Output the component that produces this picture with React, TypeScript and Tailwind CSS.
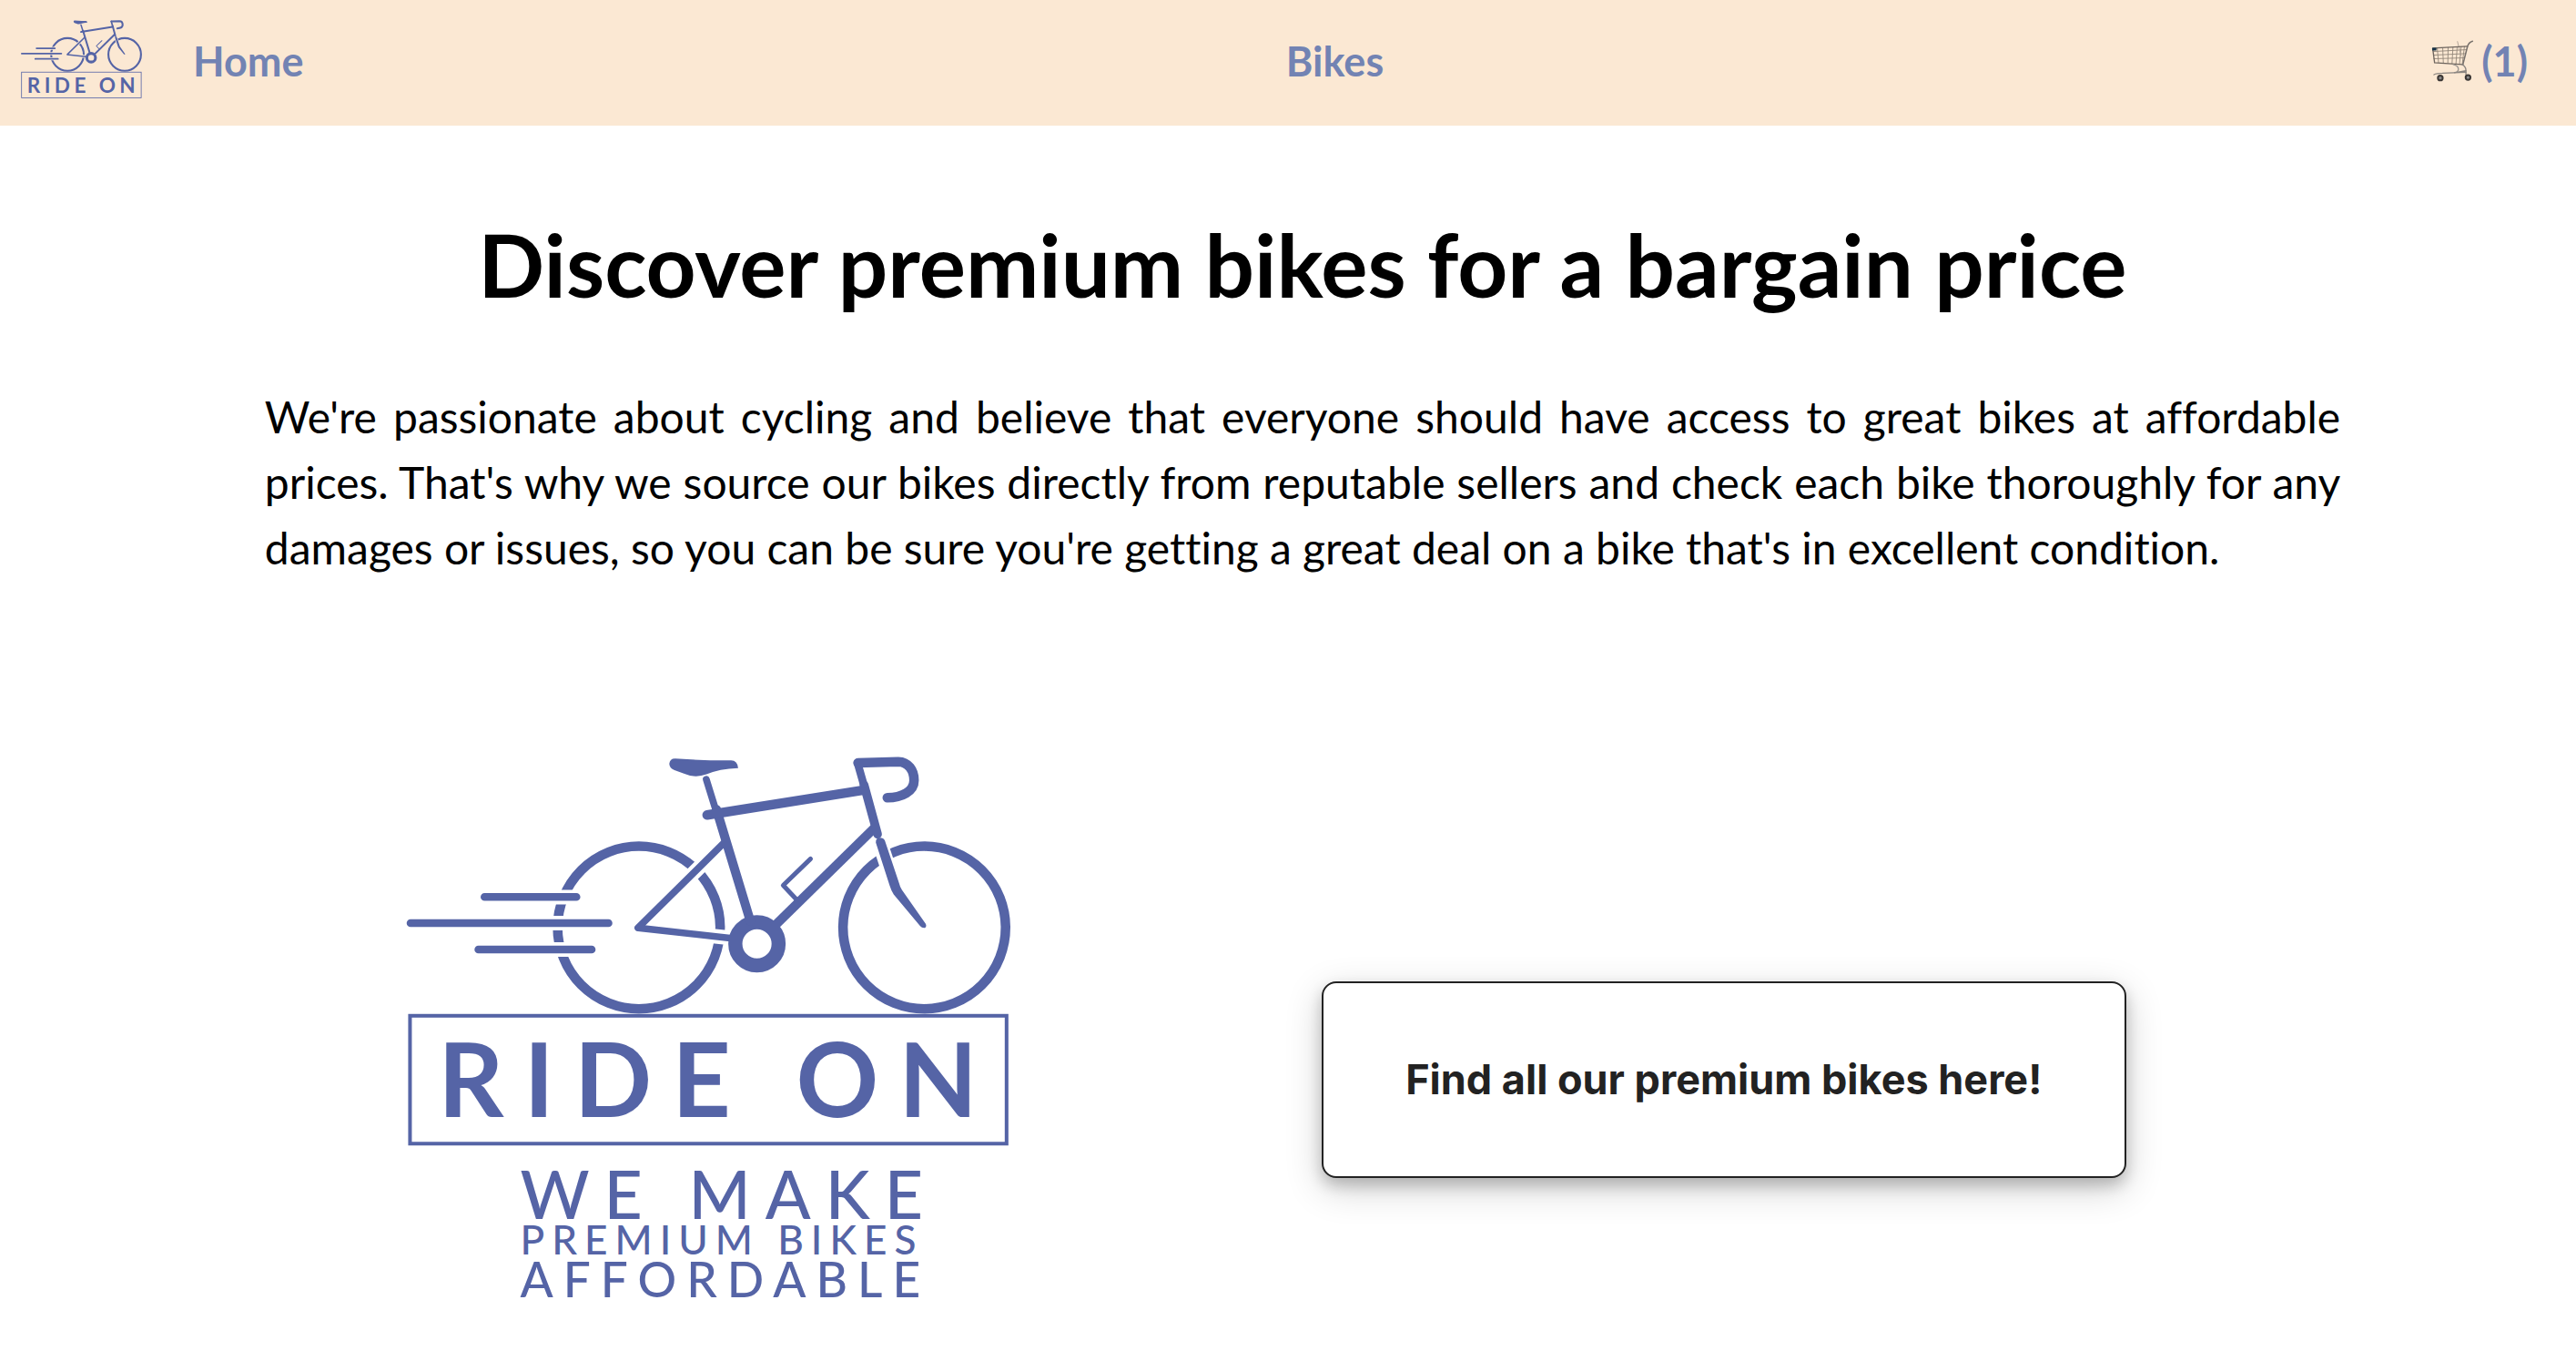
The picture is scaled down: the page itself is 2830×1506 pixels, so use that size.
import React from "react";

const INK = "#5564a6";

function BikeMark({ maskId }: { maskId: string }) {
  return (
    <g fill="none" stroke={INK} strokeLinecap="round" strokeLinejoin="round">
      <mask id={maskId} maskUnits="userSpaceOnUse" x="440" y="820" width="680" height="620">
        <rect x="440" y="820" width="680" height="620" fill="white" stroke="none" />
        <g stroke="black" strokeWidth="16" strokeLinecap="butt">
          <path d="M520 986H650M440 1014.3H680M515 1043.3H665" />
          <path d="M701 1020L795 926.7M701 1020L802 1030.5" />
          <path d="M957 900L983 978" strokeWidth="17" />
        </g>
      </mask>
      <g mask={`url(#${maskId})`} strokeWidth="10.5">
        <circle cx="702" cy="1019.2" r="89" />
        <circle cx="1014.5" cy="1019.2" r="89" />
      </g>
      <path strokeWidth="8.6" d="M533 985.7H633.6M452 1014.3H668.7M526.3 1043.3H650.3" />
      <path strokeWidth="7.6" d="M795 926.7L701 1019.6L804 1031" />
      <circle cx="831.3" cy="1037" r="23.7" strokeWidth="15.4" />
      <path strokeWidth="7.6" d="M775.8 857L786 890" />
      <path strokeWidth="10" d="M787 890L824 1012" />
      <path strokeWidth="10.5" d="M776.7 896L948.3 868.7" />
      <path strokeWidth="10" strokeLinecap="butt" d="M851 1017L960 910" />
      <path strokeWidth="9.6" d="M948.5 863L963.3 917" />
      <path strokeWidth="8.6" d="M941.3 838.6L948 862" />
      <path strokeWidth="10.5" d="M942 839L986 837.7C997 838 1003.3 847 1003.3 858C1003.3 870 990 877 974 877" />
      <path strokeWidth="5" d="M890 944L860 973L875 989" />
      <g fill={INK} stroke="none">
        <path d="M961.5 926.5Q961 921 966 921Q970 921 971.3 924L986.7 970Q988 975 990 978L1016 1015Q1017.5 1018.5 1015 1019.6Q1012 1020 1010 1017.5L981 983Q978 978 976.5 973Z" />
        <path d="M735.3 840Q736 834 742 834.3L780 836.3H803Q810 836.5 810.7 844.7Q790 845.5 776 851.5Q764 856 752 851L741 847Q735.5 845 735.3 840Z" />
      </g>
      <rect x="451.4" y="1115.8" width="653.2" height="140" strokeWidth="4" strokeLinejoin="miter" />
      <text x="482" y="1227" fill={INK} stroke="none" fontFamily="Lato, sans-serif" fontWeight="700" fontSize="112" letterSpacing="22">
        RIDE ON
      </text>
    </g>
  );
}

function NavLogo() {
  return (
    <svg viewBox="448 832 661 426" className="h-[86px] w-[133px]" role="img" aria-label="Ride On">
      <BikeMark maskId="nav-logo-gaps" />
    </svg>
  );
}

function HeroLogo() {
  return (
    <svg viewBox="440 820 680 620" className="w-[32%] shrink-0" role="img" aria-label="Ride On. We make premium bikes affordable">
      <BikeMark maskId="hero-logo-gaps" />
      <g fill={INK} fontFamily="Lato, sans-serif" fontWeight="500">
        <text x="572" y="1338" fontSize="73" letterSpacing="16">WE MAKE</text>
        <text x="572" y="1377" fontSize="44" letterSpacing="8">PREMIUM BIKES</text>
        <text x="572" y="1424" fontSize="53" letterSpacing="11">AFFORDABLE</text>
      </g>
    </svg>
  );
}

function CartIcon() {
  return (
    <svg viewBox="120 130 145 145" className="size-12" fill="none" aria-hidden="true" strokeLinecap="round">
      <g stroke="#8f8377" strokeWidth="2.6">
        <path d="M130 171L240 165M131 183L237 178M132 195L233 192" />
        <path d="M143 161L147 207M161 159L163 208M179 158L178 209M195 157L192 210M209 156L205 211M222 155L217 212M233 155L226 212" />
        <path d="M210 138L215 158L222 185" stroke="#a89b8f" />
      </g>
      <path d="M128 160L243 154M128 162L134 208L228 214" stroke="#6f665f" strokeWidth="4" />
      <path d="M260 137Q247 141 243 155L228 214" stroke="#77706b" strokeWidth="4.5" />
      <path d="M196 214Q214 218 213 231Q212 240 200 241" stroke="#9a948f" strokeWidth="4" />
      <path d="M225 214Q238 220 238 234V248" stroke="#8b8580" strokeWidth="4" />
      <path d="M132 248Q140 243 160 243L238 240M205 241L238 235" stroke="#8b8580" strokeWidth="4" />
      <rect x="126" y="159" width="14" height="9" rx="2" fill="#173247" />
      <circle cx="153" cy="259" r="8" fill="#8a8a8a" stroke="#3b3735" strokeWidth="6" />
      <circle cx="245" cy="257" r="8" fill="#8a8a8a" stroke="#3b3735" strokeWidth="6" />
    </svg>
  );
}

export default function App() {
  return (
    <div className="bg-white font-['Lato',sans-serif] text-black [font-variant-ligatures:none]">
      <header className="flex items-center bg-[#fbe8d3] pr-[53px] pl-[23px] text-[45px] leading-[54px] font-bold text-[#7283b3]">
        <a href="#" className="flex h-[138px] items-center pb-2">
          <NavLogo />
        </a>
        <nav className="grid flex-1 grid-cols-[1fr_auto_1fr] items-center pb-1">
          <a href="#home" className="justify-self-start pl-14">Home</a>
          <a href="#bikes">Bikes</a>
          <a href="#cart" aria-label="Cart, 1 item" className="flex items-center gap-2 justify-self-end">
            <CartIcon />
            <span>(1)</span>
          </a>
        </nav>
      </header>

      <main className="pt-[94px] pl-8">
        <div className="mx-auto w-[81.5%]">
          <h1 className="text-center text-8xl leading-[116px] font-bold">
            Discover premium bikes for a bargain price
          </h1>
          <p className="mt-[74px] text-justify text-5xl leading-[72px]">
            We're passionate about cycling and believe that everyone should have access to great bikes at
            affordable prices. That's why we source our bikes directly from reputable sellers and check each
            bike thoroughly for any damages or issues, so you can be sure you're getting a great deal on a bike
            that's in excellent condition.
          </p>
          <div className="mt-[181px] flex items-center gap-[15.5%] pb-16 pl-[6.5%]">
            <HeroLogo />
            <button
              type="button"
              className="mt-28 h-[216px] w-[884px] shrink-0 rounded-2xl border-2 border-[#222222] bg-white font-['Inter',sans-serif] text-[45px] font-bold text-[#222222] shadow-[0_8px_16px_rgba(0,0,0,0.2),0_12px_40px_rgba(0,0,0,0.19)]"
            >
              Find all our premium bikes here!
            </button>
          </div>
        </div>
      </main>
    </div>
  );
}
